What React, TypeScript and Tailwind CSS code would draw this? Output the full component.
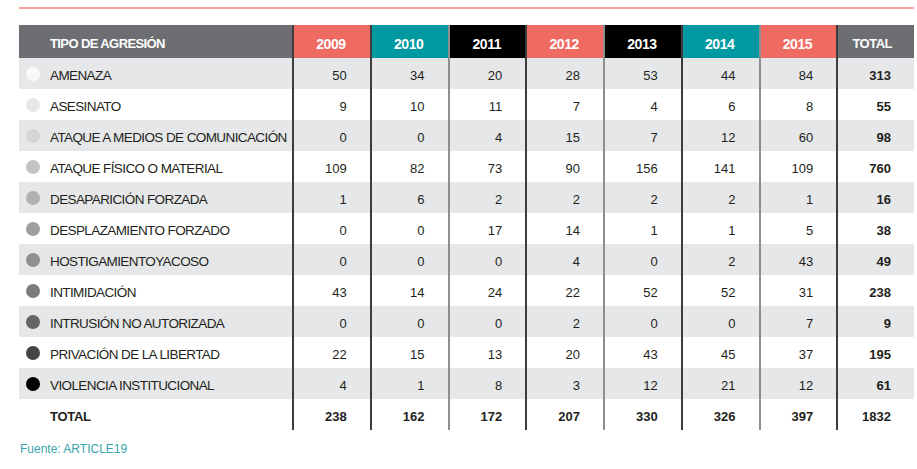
import React from "react"

type Row = {
  label: string
  dot: string
  values: number[]
  total: number
}

const years = [
  { label: "2009", bg: "bg-[#ef6a61]" },
  { label: "2010", bg: "bg-[#0099a2]" },
  { label: "2011", bg: "bg-black" },
  { label: "2012", bg: "bg-[#ef6a61]" },
  { label: "2013", bg: "bg-black" },
  { label: "2014", bg: "bg-[#0099a2]" },
  { label: "2015", bg: "bg-[#ef6a61]" },
]

// left border of each numeric column: dark / light alternating as in the print
const sep = [
  "border-[#3d3d3e]",
  "border-[#3d3d3e]",
  "border-[#8e8e90]",
  "border-[#3d3d3e]",
  "border-[#8e8e90]",
  "border-[#3d3d3e]",
  "border-[#8e8e90]",
  "border-[#3d3d3e]",
]

const rows: Row[] = [
  { label: "AMENAZA", dot: "bg-[#f9f9f9]", values: [50, 34, 20, 28, 53, 44, 84], total: 313 },
  { label: "ASESINATO", dot: "bg-[#e7e7e8]", values: [9, 10, 11, 7, 4, 6, 8], total: 55 },
  { label: "ATAQUE A MEDIOS DE COMUNICACIÓN", dot: "bg-[#d6d6d7]", values: [0, 0, 4, 15, 7, 12, 60], total: 98 },
  { label: "ATAQUE FÍSICO O MATERIAL", dot: "bg-[#c3c3c4]", values: [109, 82, 73, 90, 156, 141, 109], total: 760 },
  { label: "DESAPARICIÓN FORZADA", dot: "bg-[#b1b1b2]", values: [1, 6, 2, 2, 2, 2, 1], total: 16 },
  { label: "DESPLAZAMIENTO FORZADO", dot: "bg-[#a0a0a1]", values: [0, 0, 17, 14, 1, 1, 5], total: 38 },
  { label: "HOSTIGAMIENTOYACOSO", dot: "bg-[#8f8f90]", values: [0, 0, 0, 4, 0, 2, 43], total: 49 },
  { label: "INTIMIDACIÓN", dot: "bg-[#7b7b7c]", values: [43, 14, 24, 22, 52, 52, 31], total: 238 },
  { label: "INTRUSIÓN NO AUTORIZADA", dot: "bg-[#656566]", values: [0, 0, 0, 2, 0, 0, 7], total: 9 },
  { label: "PRIVACIÓN DE LA LIBERTAD", dot: "bg-[#454546]", values: [22, 15, 13, 20, 43, 45, 37], total: 195 },
  { label: "VIOLENCIA INSTITUCIONAL", dot: "bg-black", values: [4, 1, 8, 3, 12, 21, 12], total: 61 },
]

const totals = [238, 162, 172, 207, 330, 326, 397, 1832]

const gridCols = "grid grid-cols-[273px_repeat(8,minmax(0,1fr))]"

export default function App() {
  return (
    <div className="h-[469px] w-[917px] bg-white font-['Liberation_Sans',Arial,sans-serif] text-[#231f20]">
      <div className="pl-[19px] pr-[3px] pt-[7px]">
        {/* Rule above the table */}
        <div className="h-[2px] bg-[#f3a19b]" />

        <div className="mt-[16px]">
          {/* Header */}
          <div className={`${gridCols} h-[33px] text-white font-bold`}>
            <div className="flex items-center bg-[#6d6e71] pl-[31px] pt-[5px] text-[13px] tracking-[-0.6px]">
              TIPO DE AGRESIÓN
            </div>
            {years.map((y, i) => (
              <div
                key={y.label}
                className={`flex items-center justify-end border-l-2 ${sep[i]} ${y.bg} pr-[24px] pt-[5px] text-[14px] tracking-[-0.4px]`}
              >
                {y.label}
              </div>
            ))}
            <div className={`flex items-center justify-end border-l-2 ${sep[7]} bg-[#6d6e71] pr-[22px] pt-[5px] text-[13px] tracking-[-0.5px]`}>
              TOTAL
            </div>
          </div>

          {/* Body */}
          {rows.map((r, ri) => (
            <div
              key={r.label}
              className={`${gridCols} h-[31px] text-[13px] ${ri % 2 === 0 ? "bg-[#e6e7e8]" : "bg-white"}`}
            >
              <div className="flex items-center pl-[7px]">
                <span className={`size-[14px] shrink-0 rounded-full ${r.dot}`} />
                <span className="ml-[10px] pt-[6px] whitespace-nowrap text-[13.5px] tracking-[-0.6px]">{r.label}</span>
              </div>
              {r.values.map((v, i) => (
                <div
                  key={i}
                  className={`flex items-center justify-end border-l-2 ${sep[i]} pr-[23px] pt-[4px]`}
                >
                  {v}
                </div>
              ))}
              <div className={`flex items-center justify-end border-l-2 ${sep[7]} pr-[23px] pt-[4px] font-bold`}>
                {r.total}
              </div>
            </div>
          ))}

          {/* Total row */}
          <div className={`${gridCols} h-[31px] bg-white text-[13px] font-bold`}>
            <div className="flex items-center pl-[31px] pt-[4px] tracking-[-0.3px]">TOTAL</div>
            {totals.map((t, i) => (
              <div
                key={i}
                className={`flex items-center justify-end border-l-2 ${sep[i]} pr-[23px] pt-[4px]`}
              >
                {t}
              </div>
            ))}
          </div>
        </div>

        <p className="mt-[10px] pl-[1px] text-[12px] text-[#36a5ac]">Fuente: ARTICLE19</p>
      </div>
    </div>
  )
}
